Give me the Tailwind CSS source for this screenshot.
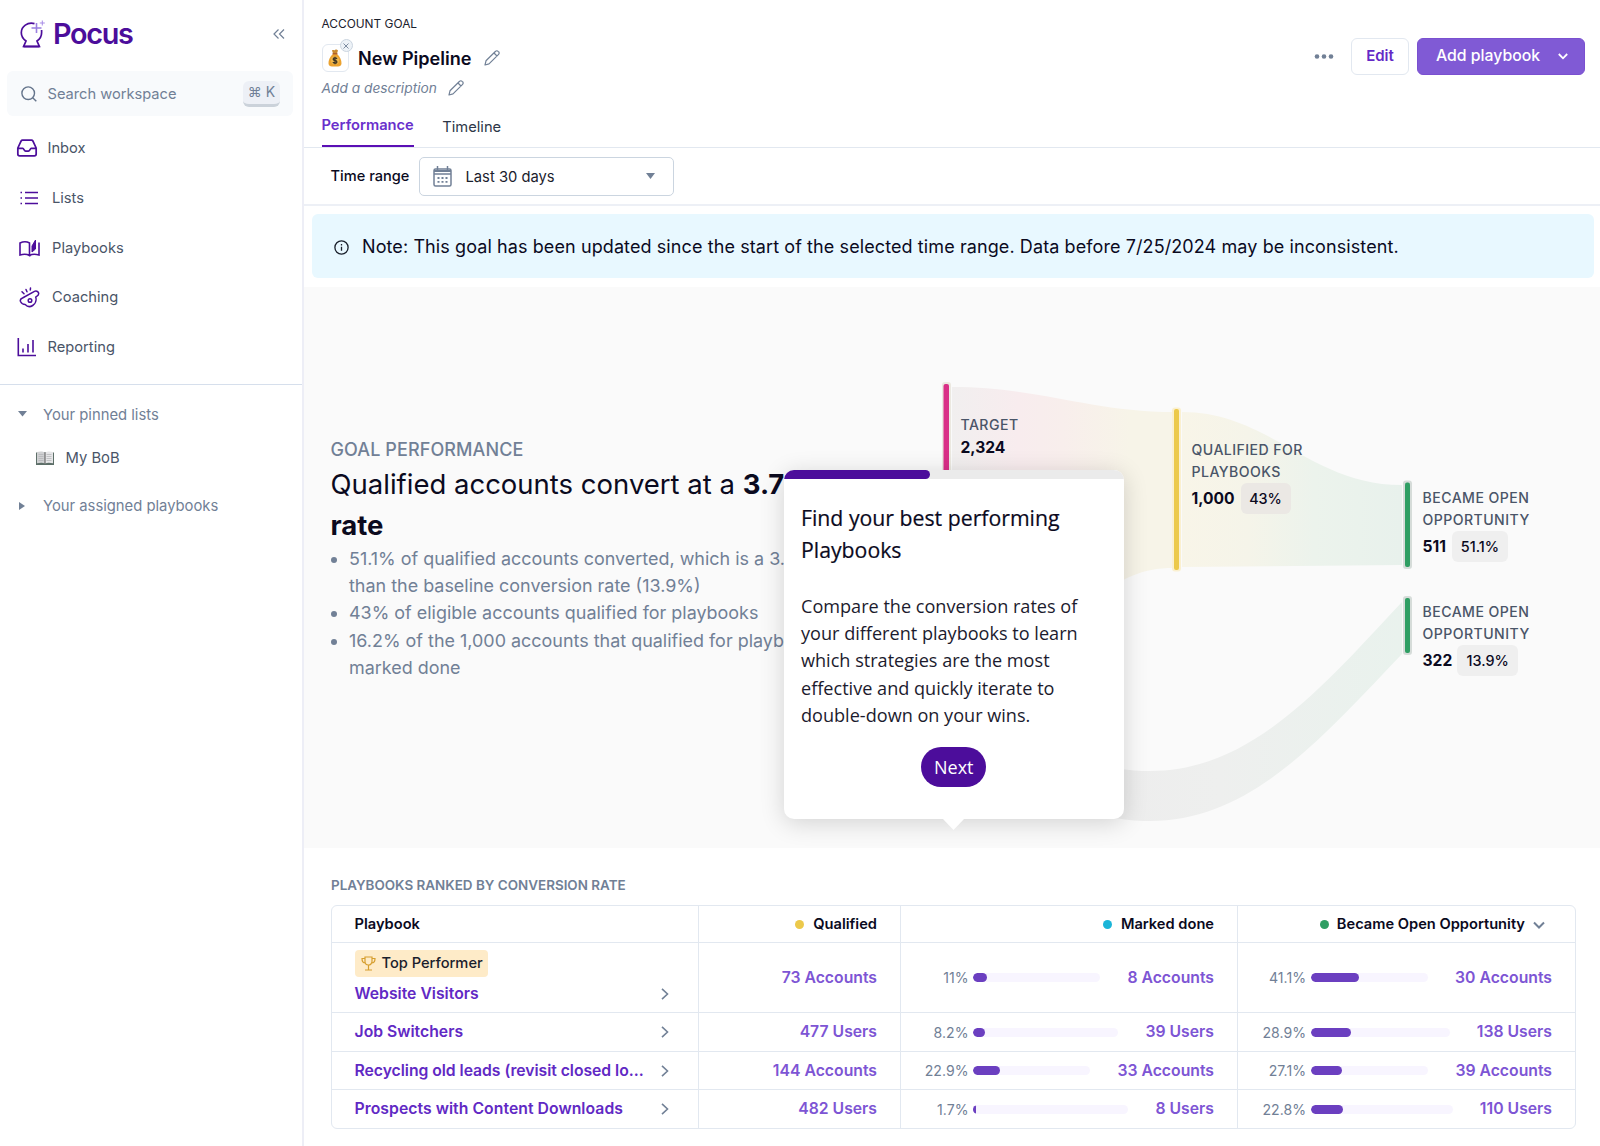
<!DOCTYPE html>
<html lang="en">
<head>
  <meta charset="UTF-8">
  <meta name="viewport" content="width=device-width, initial-scale=1.0">
  <title>New Pipeline - Pocus</title>
  <script src="https://cdn.jsdelivr.net/npm/@tailwindcss/browser@4"></script>
</head>
<body class="bg-white font-[Inter,sans-serif] text-[#0b0a1e] overflow-hidden">
  <div class="flex h-[1146px] w-[1600px]">

    <!-- Sidebar -->
    <aside class="w-[304px] shrink-0 border-r-2 border-[#edeef6] flex flex-col">
      <div class="h-[71px] flex items-center justify-between pb-[3px] pl-5 pr-[17px]">
        <div class="flex items-center gap-[7px]">
          <svg class="w-[26px] h-[30px]" viewBox="0 0 26 30" fill="none">
            <path d="M14.5 4.600C7.500 2.800 1.300 7.300 1.300 13.700c0 3.800 2 6.300 4.700 8.300L3.600 27.500h15.800L17 22c3-2 4.600-5 4.600-8.300V11" stroke="#4c0d9b" stroke-width="1.7"/>
            <path d="M3.500 27.500h16" stroke="#4c0d9b" stroke-width="2"/>
            <path d="M16.500 4v10M11.500 9h10" stroke="#9b7fe0" stroke-width="1.6"/>
            <path d="M22.300 1.500v5M19.800 4h5" stroke="#a78be6" stroke-width="1"/>
          </svg>
          <span class="text-[28.8px] leading-[30px] font-semibold tracking-[-0.045em] text-[#4c0d9b]">Pocus</span>
        </div>
        <svg class="w-3 h-3" viewBox="0 0 12 12" fill="none" stroke="#718096" stroke-width="1.2"><path d="M5.5 1.500L1 6l4.500 4.500M11 1.500L6.500 6l4.500 4.500"/></svg>
      </div>
      <div class="ml-[7px] mr-[9px] h-[45px] rounded-md bg-[#f8fafc] flex items-center pl-[14px] pr-[13px]">
        <svg class="w-4 h-4" viewBox="0 0 16 16" fill="none" stroke="#64748b" stroke-width="1.4"><circle cx="7.2" cy="7.2" r="6.3"/><path d="M11.700 11.700l3.600 3.600"/></svg>
        <span class="ml-[10.5px] pt-[2px] text-[14.65px] text-[#718096]">Search workspace</span>
        <span class="ml-auto h-[26px] w-[37px] rounded-md bg-[#edf0f6] border-b-[3px] border-[#cbd2da] text-[14px] leading-[22px] text-center text-[#718096]">⌘ K</span>
      </div>
      <nav class="pt-[7px] text-[14.7px] text-[#4a5568]">
        <a class="h-[50px] flex items-center pl-4">
          <svg class="w-[22px] h-[22px]" viewBox="0 0 24 24" fill="none" stroke="#4c0d9b" stroke-width="1.9" stroke-linejoin="round"><path d="M22 12.500h-5.500c-1 0-1.500 3-3 3h-3c-1.500 0-2-3-3-3H2M5.500 4.500C6 3.800 6.500 3.500 7 3.500h10c.5 0 1 .3 1.500 1L22 12v6.500a2 2 0 0 1-2 2H4a2 2 0 0 1-2-2V12z"/></svg>
          <span class="ml-[9.5px] pt-px">Inbox</span>
        </a>
        <a class="h-[50px] flex items-center pl-[20px]">
          <svg class="w-[18px] h-[14px]" viewBox="0 0 18 14" fill="none" stroke="#4c0d9b" stroke-width="1.5"><path d="M5 1.500h13M5 7h13M5 12.500h13M.5 1.500H2M.5 7H2M.5 12.500H2"/></svg>
          <span class="ml-[14px] pt-px">Lists</span>
        </a>
        <a class="h-[50px] flex items-center pl-[19px]">
          <svg class="w-[21px] h-[18px]" viewBox="0 0 21 18" fill="none" stroke="#4c0d9b" stroke-width="1.6"><path d="M10.500 16.500C8 15 4 15 1 16V4c3-1.500 7-1.500 9.500 0zM10.500 16.500c2.500-1.500 6-1.500 9.500-.5V3.500"/><path d="M13 7l3.500-6v9L13 13z" fill="#4c0d9b" stroke-width="1"/></svg>
          <span class="ml-[12px]">Playbooks</span>
        </a>
        <a class="h-[49px] flex items-center pl-[19px]">
          <svg class="w-[21px] h-[21px]" viewBox="0 0 21 21" fill="none" stroke="#4c0d9b" stroke-width="1.5" stroke-linecap="round" stroke-linejoin="round"><path d="M1.500 14.500C1 13 2 11.500 3.500 11L15.500 4.300c1.500-.8 3.500 0 4 1.500.5 1.500-.3 2.700-1.800 3.500l-1 .7c1 3-.2 6.700-3 8.500-2.700 1.700-5.700 1-7.500-1-1.400 0-3.500-.5-4.700-3z"/><circle cx="11" cy="13.500" r="1.800"/><path d="M3 4.800l2 2M7 2.500l1 2.300M11.500 1l-.2 2"/></svg>
          <span class="ml-[12px]">Coaching</span>
        </a>
        <a class="h-[50px] flex items-center pl-[17px]">
          <svg class="w-[20px] h-[20px]" viewBox="0 0 20 20" fill="none" stroke="#4c0d9b" stroke-width="1.6"><path d="M1.300 1v17.500H19M6 15.500v-4M11 15.500V7M16 15.500V3"/></svg>
          <span class="ml-[10.5px]">Reporting</span>
        </a>
      </nav>
      <div class="mt-[12px] h-px bg-[#d6dfec]"></div>
      <div class="h-[60px] flex items-center pl-[18px] text-[14.8px] text-[#718096]">
        <svg class="w-[9px] h-[6px] -mt-[2px]" viewBox="0 0 9 6"><path d="M0 0h9L4.500 5.500z" fill="#718096"/></svg>
        <span class="ml-[16px]">Your pinned lists</span>
      </div>
      <div class="h-[26px] flex items-center pl-9 text-[14.8px] text-[#4a5568]">
        <svg class="w-[18px] h-[14px] -mt-px" viewBox="0 0 18 14"><path d="M0 1.500h18V14H0z" fill="#5d6f68"/><path d="M1 1c3-1 6-.8 8 .6V12.500C7 11.500 4 11.500 1 12.300z" fill="#d0d1d3"/><path d="M17 1c-3-1-6-.8-8 .6V12.500c2-1 5-1 8-.2z" fill="#e6e6e8"/><path d="M8.500 1.200h1v11.500h-1z" fill="#555"/><path d="M2.500 3.500h5M2.500 5.500h5M2.500 7.500h5M2.500 9.500h5M10.500 3.500h5M10.500 5.500h5M10.500 7.500h5M10.500 9.500h5" stroke="#b0b2b5" stroke-width=".7"/></svg>
        <span class="ml-[11.5px]">My BoB</span>
      </div>
      <div class="h-[70px] flex items-center pl-[19px] text-[14.8px] text-[#718096]">
        <svg class="w-[6px] h-[8px]" viewBox="0 0 6 8"><path d="M0 0l6 4-6 4z" fill="#718096"/></svg>
        <span class="ml-[18px]">Your assigned playbooks</span>
      </div>
    </aside>

    <main class="flex-1 flex flex-col">
      <!-- Page header -->
      <header class="h-[148px] border-b border-[#e2e8f0] flex justify-between pl-[17.5px] pr-[15px]">
        <div class="flex flex-col pt-4">
          <div class="text-[11.9px] leading-4 text-[#1a202c]">ACCOUNT GOAL</div>
          <div class="mt-[12px] h-[28px] flex items-center">
            <div class="relative w-[27px] h-[28px] rounded-md border border-[#e2e8f0] flex items-center justify-center">
              <svg class="w-[14px] h-[18px]" viewBox="0 0 14 18"><path d="M4 1.500C5 .5 6 1.700 7 1s2-.5 3 .5L8.800 5H5.200z" fill="#c98a30"/><path d="M5 5h4c3 2.500 4.700 6 4.500 9.500-.1 2-1.500 3-3.500 3H4c-2 0-3.400-1-3.500-3C.3 11 2 7.500 5 5z" fill="#eba22f"/><path d="M4.500 4.800h5" stroke="#a8552b" stroke-width="1.2"/><circle cx="7" cy="11.500" r="4" fill="#f0b84e"/><path d="M9 9.800C8 8.500 5.200 8.700 5.200 10.200c0 1.700 3.700.9 3.700 2.700 0 1.700-3.100 1.500-4 .2M7 7.800v7.400" stroke="#3d3424" stroke-width="1.3" fill="none"/></svg>
              <span class="absolute -top-[6px] -right-[5px] w-[13px] h-[13px] rounded-full bg-[#edf2f7] border border-[#cbd5e0] flex items-center justify-center">
                <svg class="w-[6px] h-[6px]" viewBox="0 0 6 6" stroke="#718096" stroke-width=".9"><path d="M.5.5l5 5M5.500.5l-5 5"/></svg>
              </span>
            </div>
            <h1 class="ml-[9.5px] pt-px text-[18.1px] font-semibold">New Pipeline</h1>
            <svg class="ml-[12.5px] w-4 h-4" viewBox="0 0 16 16" fill="none" stroke="#718096" stroke-width="1.2" stroke-linejoin="round"><path d="M1 15l1-4.200L11.600 1.300a1.700 1.700 0 0 1 2.500 0l.5.5a1.700 1.700 0 0 1 0 2.500L5 13.900zM10 3l3 3"/></svg>
          </div>
          <div class="mt-[6px] h-5 flex items-center">
            <span class="text-[13.75px] italic text-[#718096]">Add a description</span>
            <svg class="ml-[11.5px] w-4 h-4" viewBox="0 0 16 16" fill="none" stroke="#718096" stroke-width="1.2" stroke-linejoin="round"><path d="M1 15l1-4.200L11.600 1.300a1.700 1.700 0 0 1 2.500 0l.5.5a1.700 1.700 0 0 1 0 2.500L5 13.900zM10 3l3 3"/></svg>
          </div>
          <div class="mt-auto flex gap-[28.5px] text-[14.7px]">
            <a class="h-[33px] border-b-2 border-[#5b0fb5] font-semibold text-[#6930cc]">Performance</a>
            <a class="h-[33px] pt-[2px] text-[#2d3748]">Timeline</a>
          </div>
        </div>
        <div class="flex pt-[38px]">
          <svg class="mt-4 w-5 h-5" viewBox="0 0 20 20" fill="#718096"><circle cx="3" cy="2.500" r="2.300"/><circle cx="10" cy="2.500" r="2.300"/><circle cx="17" cy="2.500" r="2.300"/></svg>
          <button class="ml-[17px] h-[37px] w-[58px] rounded-md border border-[#e2e8f0] text-[15px] font-semibold text-[#6429c6]">Edit</button>
          <button class="ml-2 h-[37px] w-[168px] rounded-md border border-[#7a50d0] bg-[#805ad5] text-white text-[15.8px] font-medium flex items-center pl-[18px]">
            <span class="pb-[2px]">Add playbook</span>
            <svg class="ml-[18px] w-[10px] h-[7px]" viewBox="0 0 10 7" fill="none" stroke="white" stroke-width="1.8"><path d="M.8 1L5 5.300 9.200 1"/></svg>
          </button>
        </div>
      </header>

      <div class="h-[58px] border-b-2 border-[#edf0f6] flex items-center pl-[26.5px] text-[14.75px]">
        <span class="w-[79px] pt-[2px] font-medium whitespace-nowrap text-[14.6px]">Time range</span>
        <div class="ml-[9px] w-[255px] h-[39px] rounded-[5px] border border-[#cbd5e0] flex items-center pl-[13px] pr-[18px]">
          <svg class="w-[19px] h-[21px]" viewBox="0 0 19 21" fill="none" stroke="#718096" stroke-width="1.5"><rect x="1" y="3" width="17" height="17" rx="1.500"/><path d="M1 5h17" stroke-width="2"/><path d="M1 8h17M4.500 0v4M14.500 0v4"/><path d="M4.500 12h2M8.500 12h2M12.500 12h2M4.500 15.800h2M8.500 15.800h2M12.500 15.800h2" stroke-width="1.8"/></svg>
          <span class="ml-[14px] pt-[2px] text-[#1a202c]">Last 30 days</span>
          <svg class="ml-auto w-[9px] h-[6px]" viewBox="0 0 9 6"><path d="M0 0h9L4.500 6z" fill="#718096"/></svg>
        </div>
      </div>

      <div class="mt-[8px] ml-[8px] mr-[6px] h-[64px] rounded-md bg-[#e8f8ff] flex items-center pl-[22px]">
        <svg class="mt-[2px] w-[15px] h-[15px]" viewBox="0 0 15 15" fill="none" stroke="#1a202c" stroke-width="1.3"><circle cx="7.5" cy="7.500" r="6.600"/><path d="M7.500 6.800v4M7.500 4v1.400"/></svg>
        <span class="ml-[13px] text-[18px] tracking-[0.095px]">Note: This goal has been updated since the start of the selected time range. Data before 7/25/2024 may be inconsistent.</span>
      </div>

      <!-- Goal performance and funnel -->
      <section class="relative mt-[9px] h-[561px] bg-[#fafafa] pl-[26.5px]">
        <div class="w-[560px] pt-[152px]">
          <h3 class="text-[18px] leading-[22px] font-medium tracking-[0.1px] text-[#718096]">GOAL PERFORMANCE</h3>
          <p class="mt-[3px] text-[27.5px] leading-[41px] whitespace-nowrap">Qualified accounts convert at a <b class="font-bold">3.7x higher</b><br><b class="font-bold">rate</b></p>
          <ul class="-mt-px ml-[18.5px] list-disc text-[17.95px] leading-[27.2px] whitespace-nowrap text-[#718096]">
            <li>51.1% of qualified accounts converted, which is a 3.7x higher rate<br>than the baseline conversion rate (13.9%)</li>
            <li>43% of eligible accounts qualified for playbooks</li>
            <li>16.2% of the 1,000 accounts that qualified for playbooks were<br>marked done</li>
          </ul>
        </div>

        <svg class="absolute left-0 top-0 w-[1296px] h-[561px]" viewBox="304 287 1296 561">
          <defs>
            <linearGradient id="g1" gradientUnits="userSpaceOnUse" x1="952" y1="0" x2="1174" y2="0"><stop offset="0" stop-color="#f1efef"/><stop offset=".3" stop-color="#f8ecee"/><stop offset=".5" stop-color="#f8eeec"/><stop offset=".8" stop-color="#f7f4e8"/></linearGradient>
            <linearGradient id="g2" gradientUnits="userSpaceOnUse" x1="1182" y1="0" x2="1402" y2="0"><stop offset="0" stop-color="#f8f5e8"/><stop offset=".3" stop-color="#f5f4e9"/><stop offset=".6" stop-color="#ecf3ec"/><stop offset="1" stop-color="#e8f1ec"/></linearGradient>
            <linearGradient id="g3" gradientUnits="userSpaceOnUse" x1="1120" y1="0" x2="1402" y2="0"><stop offset="0" stop-color="#ededed"/><stop offset=".35" stop-color="#eeefee"/><stop offset="1" stop-color="#e9f2ed"/></linearGradient>
          </defs>
          <path d="M952 387C1040 387 1090 412 1174 412V568C1140 568 1125 578 1090 600L952 600z" fill="url(#g1)"/>
          <path d="M1182 412C1270 412 1310 485 1402 485V565L1182 567z" fill="url(#g2)"/>
          <path d="M1150 771C1250 771 1320 690 1402 602V654C1320 740 1250 821 1150 821C1120 821 1100 815 1090 810V760C1110 768 1125 771 1150 771z" fill="url(#g3)"/>
          <rect x="942" y="382" width="9" height="150" rx="3" fill="#ebe8e0"/><rect x="943.5" y="384" width="5.5" height="150" rx="2" fill="#d92f87"/>
          <rect x="1172" y="407.5" width="9" height="164" rx="3" fill="#faf0d0"/><rect x="1174" y="409" width="5" height="161" rx="2" fill="#ecc94b"/>
          <rect x="1403" y="480.5" width="9" height="88.5" rx="3" fill="#d6dcd9"/><rect x="1405" y="482.5" width="5" height="84.5" rx="2" fill="#2f9e63"/>
          <rect x="1403" y="596" width="9" height="59" rx="3" fill="#d6dcd9"/><rect x="1405" y="598" width="5" height="55" rx="2" fill="#2f9e63"/>
        </svg>
        <div class="absolute left-[656.5px] top-[127px] text-[14.1px] leading-[22px] font-medium tracking-[0.45px] text-[#4a5568]">
          TARGET
          <div class="text-[15.6px] leading-[24px] font-bold tracking-normal text-[#0b0a1e]">2,324</div>
        </div>
        <div class="absolute left-[887.5px] top-[152px] text-[14.1px] leading-[22px] font-medium tracking-[0.45px] text-[#4a5568]">
          QUALIFIED FOR<br>PLAYBOOKS
          <div class="flex items-center gap-[6px] text-[15.6px] font-bold tracking-normal text-[#0b0a1e]">1,000<span class="h-[31px] w-[50px] text-center rounded-md bg-[#ebe8e4] text-[14.4px] leading-[31px] font-medium">43%</span></div>
        </div>
        <div class="absolute left-[1118.5px] top-[200px] text-[14.1px] leading-[22px] font-medium tracking-[0.45px] text-[#4a5568]">
          BECAME OPEN<br>OPPORTUNITY
          <div class="flex items-center gap-[6px] text-[15.6px] font-bold tracking-normal text-[#0b0a1e]">511<span class="h-[31px] w-[56px] text-center rounded-md bg-[#efefef] text-[14.4px] leading-[31px] font-medium">51.1%</span></div>
        </div>
        <div class="absolute left-[1118.5px] top-[314px] text-[14.1px] leading-[22px] font-medium tracking-[0.45px] text-[#4a5568]">
          BECAME OPEN<br>OPPORTUNITY
          <div class="flex items-center gap-[5px] text-[15.6px] font-bold tracking-normal text-[#0b0a1e]">322<span class="h-[31px] w-[61px] text-center rounded-md bg-[#efefef] text-[14.4px] leading-[31px] font-medium">13.9%</span></div>
        </div>

        <!-- Onboarding tooltip -->
        <div class="absolute left-[480px] top-[183px] w-[339.5px] h-[349px] font-['Open_Sans',sans-serif]">
          <div class="h-full rounded-[10px] bg-white overflow-hidden shadow-[0_4px_24px_rgba(0,0,0,0.16)] flex flex-col">
            <div class="h-[9px] shrink-0 bg-[#ebebeb]"><div class="h-full w-[146px] rounded-r-full bg-[#4c0d9b]"></div></div>
            <h2 class="mt-[23px] px-[17px] text-[21.25px] leading-[31.5px] [-webkit-text-stroke:0.2px]">Find your best performing Playbooks</h2>
            <p class="mt-[28px] px-[17px] text-[18.1px] leading-[27.2px] text-[#1c1b2e]">Compare the conversion rates of<br>your different playbooks to learn<br>which strategies are the most<br>effective and quickly iterate to<br>double-down on your wins.</p>
            <button class="mt-[18px] self-center w-[65px] h-[40px] rounded-full bg-[#4c0d9b] text-white text-[18px]">Next</button>
          </div>
          <svg class="absolute left-[158px] top-[348px] w-[23px] h-3" viewBox="0 0 23 12"><path d="M0 0h23L11.500 12z" fill="white"/></svg>
        </div>
      </section>

      <!-- Playbooks table -->
      <section class="pl-[27px] pr-6">
        <h3 class="pt-[26px] text-[13.45px] leading-[22px] font-semibold text-[#718096]">PLAYBOOKS RANKED BY CONVERSION RATE</h3>
        <div class="mt-[9px] rounded-md border border-[#e2e8f0] divide-y divide-[#e2e8f0]">
          <div class="h-[37px] grid grid-cols-[367px_202px_337px_1fr] divide-x divide-[#e2e8f0] text-[14.65px] font-semibold">
            <div class="flex items-center pt-px pl-[22.5px]">Playbook</div>
            <div class="flex items-center justify-end gap-[9px] pt-px pr-[23px]"><i class="w-[9px] h-[9px] rounded-full bg-[#ecc94b]"></i>Qualified</div>
            <div class="flex items-center justify-end gap-[9px] pt-px pr-[23px]"><i class="w-[9px] h-[9px] rounded-full bg-[#1bb5d8]"></i>Marked done</div>
            <div class="flex items-center justify-end gap-[8px] pt-px pr-[30px]"><i class="w-[9px] h-[9px] rounded-full bg-[#2f9e63]"></i>Became Open Opportunity<svg class="w-3 h-2" viewBox="0 0 12 8" fill="none" stroke="#718096" stroke-width="2"><path d="M1 1.500l5 5 5-5"/></svg></div>
          </div>
          <div class="h-[70px] grid grid-cols-[367px_202px_337px_1fr] divide-x divide-[#e2e8f0] text-[15.75px] font-semibold text-[#7d55d4]">
            <div class="pl-[22.5px] pt-[7px] text-[#6129c4]">
              <div class="inline-flex h-[27px] items-center gap-[6px] rounded bg-[#feebc8] pl-[6px] pr-[5px] text-[14.65px] font-medium text-[#1a202c]">
                <svg class="w-[15px] h-[15px]" viewBox="0 0 15 15" fill="none" stroke="#d69e2e" stroke-width="1.2"><path d="M4 1h7v4.500a3.500 3.500 0 0 1-7 0zM4 2.500H1c0 3 1 4.500 3.500 4.500M11 2.500h3c0 3-1 4.500-3.500 4.500M7.500 9v4.500M4 14h7"/></svg>
                <span class="pt-px">Top Performer</span>
              </div>
              <div class="flex items-center justify-between pr-[29px] leading-[32px]">Website Visitors<svg class="w-2 h-3" viewBox="0 0 8 12" fill="none" stroke="#718096" stroke-width="1.6"><path d="M1 .8L6.500 6 1 11.200"/></svg></div>
            </div>
            <div class="flex items-center justify-end pr-[23px]">73 Accounts</div>
            <div class="flex items-center pr-[23px]"><span class="w-[67.5px] pt-px text-right text-[14.1px] font-normal text-[#718096]">11%</span><div class="ml-[4.5px] flex-1 h-[9px] rounded-full bg-[#f8f5ff] overflow-hidden"><div class="h-full rounded-full bg-[#6b3fc0]" style="width:11%"></div></div><span class="ml-[27px]">8 Accounts</span></div>
            <div class="flex items-center pr-[23px]"><span class="w-[68px] pt-px text-right text-[14.1px] font-normal text-[#718096]">41.1%</span><div class="ml-[4.5px] flex-1 h-[9px] rounded-full bg-[#f8f5ff] overflow-hidden"><div class="h-full rounded-full bg-[#6b3fc0]" style="width:41.1%"></div></div><span class="ml-[27px]">30 Accounts</span></div>
          </div>
          <div class="h-[39px] grid grid-cols-[367px_202px_337px_1fr] divide-x divide-[#e2e8f0] text-[15.75px] font-semibold text-[#7d55d4]">
            <div class="flex items-center justify-between pl-[22.5px] pr-[29px] text-[#6129c4]">Job Switchers<svg class="w-2 h-3" viewBox="0 0 8 12" fill="none" stroke="#718096" stroke-width="1.6"><path d="M1 .8L6.500 6 1 11.200"/></svg></div>
            <div class="flex items-center justify-end pr-[23px]">477 Users</div>
            <div class="flex items-center pr-[23px]"><span class="w-[67.5px] pt-px text-right text-[14.1px] font-normal text-[#718096]">8.2%</span><div class="ml-[4.5px] flex-1 h-[9px] rounded-full bg-[#f8f5ff] overflow-hidden"><div class="h-full rounded-full bg-[#6b3fc0]" style="width:8.2%"></div></div><span class="ml-[27px]">39 Users</span></div>
            <div class="flex items-center pr-[23px]"><span class="w-[68px] pt-px text-right text-[14.1px] font-normal text-[#718096]">28.9%</span><div class="ml-[4.5px] flex-1 h-[9px] rounded-full bg-[#f8f5ff] overflow-hidden"><div class="h-full rounded-full bg-[#6b3fc0]" style="width:28.9%"></div></div><span class="ml-[27px]">138 Users</span></div>
          </div>
          <div class="h-[38px] grid grid-cols-[367px_202px_337px_1fr] divide-x divide-[#e2e8f0] text-[15.75px] font-semibold text-[#7d55d4]">
            <div class="flex items-center justify-between pl-[22.5px] pr-[29px] text-[#6129c4]"><span class="tracking-[-0.04px]">Recycling old leads (revisit closed lo...</span><svg class="w-2 h-3" viewBox="0 0 8 12" fill="none" stroke="#718096" stroke-width="1.6"><path d="M1 .8L6.500 6 1 11.200"/></svg></div>
            <div class="flex items-center justify-end pr-[23px]">144 Accounts</div>
            <div class="flex items-center pr-[23px]"><span class="w-[67.5px] pt-px text-right text-[14.1px] font-normal text-[#718096]">22.9%</span><div class="ml-[4.5px] flex-1 h-[9px] rounded-full bg-[#f8f5ff] overflow-hidden"><div class="h-full rounded-full bg-[#6b3fc0]" style="width:22.9%"></div></div><span class="ml-[27px]">33 Accounts</span></div>
            <div class="flex items-center pr-[23px]"><span class="w-[68px] pt-px text-right text-[14.1px] font-normal text-[#718096]">27.1%</span><div class="ml-[4.5px] flex-1 h-[9px] rounded-full bg-[#f8f5ff] overflow-hidden"><div class="h-full rounded-full bg-[#6b3fc0]" style="width:27.1%"></div></div><span class="ml-[27px]">39 Accounts</span></div>
          </div>
          <div class="h-[38px] grid grid-cols-[367px_202px_337px_1fr] divide-x divide-[#e2e8f0] text-[15.75px] font-semibold text-[#7d55d4]">
            <div class="flex items-center justify-between pl-[22.5px] pr-[29px] text-[#6129c4]"><span class="tracking-[0.05px]">Prospects with Content Downloads</span><svg class="w-2 h-3" viewBox="0 0 8 12" fill="none" stroke="#718096" stroke-width="1.6"><path d="M1 .8L6.500 6 1 11.200"/></svg></div>
            <div class="flex items-center justify-end pr-[23px]">482 Users</div>
            <div class="flex items-center pr-[23px]"><span class="w-[67.5px] pt-px text-right text-[14.1px] font-normal text-[#718096]">1.7%</span><div class="ml-[4.5px] flex-1 h-[9px] rounded-full bg-[#f8f5ff] overflow-hidden"><div class="h-full rounded-full bg-[#6b3fc0]" style="width:1.7%"></div></div><span class="ml-[27px]">8 Users</span></div>
            <div class="flex items-center pr-[23px]"><span class="w-[68px] pt-px text-right text-[14.1px] font-normal text-[#718096]">22.8%</span><div class="ml-[4.5px] flex-1 h-[9px] rounded-full bg-[#f8f5ff] overflow-hidden"><div class="h-full rounded-full bg-[#6b3fc0]" style="width:22.8%"></div></div><span class="ml-[27px]">110 Users</span></div>
          </div>
        </div>
      </section>
    </main>
  </div>
</body>
</html>
